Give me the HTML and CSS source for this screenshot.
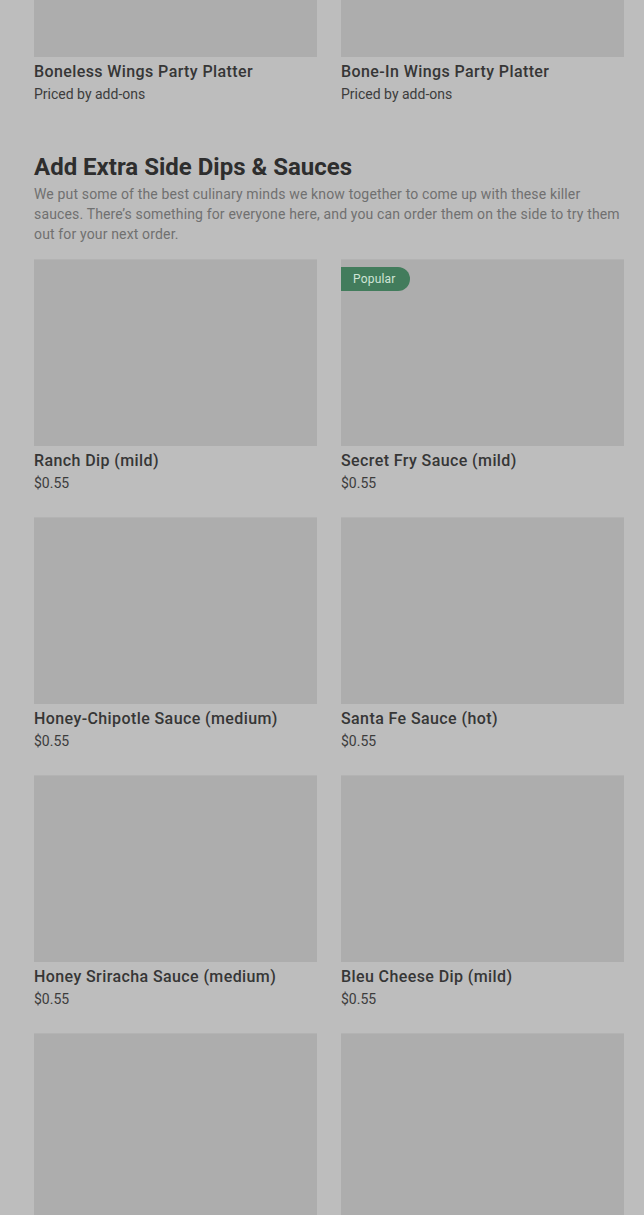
FILE: index.html
```html
<!DOCTYPE html>
<html lang="en">
<head>
  <meta charset="UTF-8" />
  <meta name="viewport" content="width=device-width, initial-scale=1.0"/>
  <title>Menu</title>
  <link rel="stylesheet" href="styles.css">
</head>
<body>
  <div class="menu">
    <section class="section section-platters">
      <div class="grid">
        <div class="item">
          <div class="photo"></div>
          <div class="name">Boneless Wings Party Platter</div>
          <div class="price">Priced by add-ons</div>
        </div>
        <div class="item">
          <div class="photo"></div>
          <div class="name">Bone-In Wings Party Platter</div>
          <div class="price">Priced by add-ons</div>
        </div>
      </div>
    </section>

    <section class="section">
      <h2>Add Extra Side Dips &amp; Sauces</h2>
      <p class="desc">We put some of the best culinary minds we know together to come up with these killer sauces. There’s something for everyone here, and you can order them on the side to try them out for your next order.</p>
      <div class="grid">
        <div class="item">
          <div class="photo"></div>
          <div class="name">Ranch Dip (mild)</div>
          <div class="price">$0.55</div>
        </div>
        <div class="item">
          <div class="photo"><span class="badge">Popular</span></div>
          <div class="name">Secret Fry Sauce (mild)</div>
          <div class="price">$0.55</div>
        </div>
        <div class="item">
          <div class="photo"></div>
          <div class="name">Honey-Chipotle Sauce (medium)</div>
          <div class="price">$0.55</div>
        </div>
        <div class="item">
          <div class="photo"></div>
          <div class="name">Santa Fe Sauce (hot)</div>
          <div class="price">$0.55</div>
        </div>
        <div class="item">
          <div class="photo"></div>
          <div class="name">Honey Sriracha Sauce (medium)</div>
          <div class="price">$0.55</div>
        </div>
        <div class="item">
          <div class="photo"></div>
          <div class="name">Bleu Cheese Dip (mild)</div>
          <div class="price">$0.55</div>
        </div>
        <div class="item">
          <div class="photo"></div>
        </div>
        <div class="item">
          <div class="photo"></div>
        </div>
      </div>
    </section>
  </div>
</body>
</html>
```

FILE: styles.css
```css
body {
  margin: 0;
  background: #bdbdbd;
  font-family: Roboto, "Liberation Sans", sans-serif;
  color: #2f2f2f;
  overflow: hidden;
}
.menu {
  padding: 0 20px 0 34px;
  margin-top: -130px;
}
.section-platters {
  margin-bottom: 47px;
}
.grid {
  display: grid;
  grid-template-columns: 1fr 1fr;
  column-gap: 24px;
  row-gap: 24px;
}
.photo {
  position: relative;
  height: 187px;
  background: #adadad;
  box-shadow: inset 0 1px 0 #b3b3b3;
}
.name {
  margin-top: 5px;
  font-size: 16px;
  line-height: 20px;
  font-weight: 500;
  letter-spacing: 0.4px;
  color: #363636;
}
.price {
  margin-top: 2px;
  font-size: 14px;
  line-height: 20px;
  color: #3c3c3c;
}
h2 {
  margin: 0;
  font-size: 24px;
  line-height: 32px;
  font-weight: 700;
  color: #2e2e2e;
}
.desc {
  margin: 1px 0 15px;
  font-size: 14px;
  line-height: 20px;
  letter-spacing: 0.15px;
  color: #707070;
}
.badge {
  position: absolute;
  top: 8px;
  left: 0;
  height: 24px;
  line-height: 24px;
  padding: 0 14px 0 12px;
  background: #427c5c;
  color: #cfe4d6;
  font-size: 12px;
  letter-spacing: 0.2px;
  border-radius: 0 12px 12px 0;
}
```
